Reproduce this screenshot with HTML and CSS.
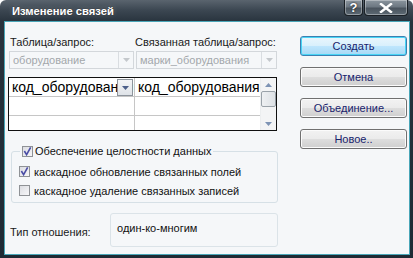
FILE: index.html
```html
<!DOCTYPE html>
<html lang="ru">
<head>
<meta charset="utf-8">
<title>Изменение связей</title>
<link rel="stylesheet" href="styles.css">
</head>
<body>
<div class="window">
  <div class="titlebar">
    <span class="title">Изменение связей</span>
    <div class="caption-btns">
      <span class="cap-btn help">?</span>
      <span class="cap-btn close">
        <svg width="14" height="10" viewBox="0 0 14 10"><path d="M2 1 L12 9 M12 1 L2 9" stroke="#fff" stroke-width="2.4" stroke-linecap="square"/></svg>
      </span>
    </div>
  </div>
  <div class="client">
    <div class="left">
      <div class="labels">
        <span class="lbl lbl1">Таблица/запрос:</span>
        <span class="lbl lbl2">Связанная таблица/запрос:</span>
      </div>
      <div class="combos">
        <div class="combo c1"><span>оборудование</span><span class="cbtn"><svg width="7" height="4" viewBox="0 0 7 4"><path d="M0 0 H7 L3.5 4Z" fill="#c4c8cc"/></svg></span></div>
        <div class="combo c2"><span>марки_оборудования</span><span class="cbtn"><svg width="7" height="4" viewBox="0 0 7 4"><path d="M0 0 H7 L3.5 4Z" fill="#c4c8cc"/></svg></span></div>
      </div>
      <div class="grid">
        <div class="cols">
          <div class="row">
            <div class="cell col1"><span class="ctext">код_оборудования</span><span class="gbtn"><svg width="7" height="4" viewBox="0 0 7 4"><path d="M0 0 H7 L3.5 4Z" fill="#4c5f8a"/></svg></span></div>
            <div class="cell col2"><span class="ctext">код_оборудования</span></div>
          </div>
          <div class="row">
            <div class="cell col1"></div>
            <div class="cell col2"></div>
          </div>
          <div class="row last">
            <div class="cell col1"></div>
            <div class="cell col2"></div>
          </div>
        </div>
        <div class="scroll">
          <svg class="sarrow" width="7" height="4" viewBox="0 0 7 4"><path d="M0 4 H7 L3.5 0Z" fill="#7d93b4"/></svg>
          <div class="thumb"></div>
          <div class="track"></div>
          <svg class="sarrow" width="7" height="4" viewBox="0 0 7 4"><path d="M0 0 H7 L3.5 4Z" fill="#7d93b4"/></svg>
        </div>
      </div>
      <fieldset class="group">
        <legend class="chk chk-first"><span class="box on"><svg width="9" height="9" viewBox="0 0 10 10"><path d="M1.5 4.5 L4 8.5 L8.5 0.5" fill="none" stroke="#4b4ea6" stroke-width="1.8"/></svg></span>Обеспечение целостности данных</legend>
        <div class="chk"><span class="box on"><svg width="9" height="9" viewBox="0 0 10 10"><path d="M1.5 4.5 L4 8.5 L8.5 0.5" fill="none" stroke="#4b4ea6" stroke-width="1.8"/></svg></span>каскадное обновление связанных полей</div>
        <div class="chk"><span class="box"></span>каскадное удаление связанных записей</div>
      </fieldset>
      <div class="type-row">
        <span class="type-lbl">Тип отношения:</span>
        <div class="type-box">один-ко-многим</div>
      </div>
    </div>
    <div class="right">
      <button class="btn default">Создать</button>
      <button class="btn">Отмена</button>
      <button class="btn">Объединение...</button>
      <button class="btn">Новое..</button>
    </div>
  </div>
</div>
</body>
</html>
```

FILE: styles.css
```css
* { box-sizing: border-box; }
html, body { margin: 0; padding: 0; background: #ffffff; }
body { width: 413px; height: 258px; overflow: hidden; font-family: "Liberation Sans", Arial, sans-serif; font-size: 11px; }

.window {
  width: 413px; height: 258px;
  display: flex; flex-direction: column;
  background: linear-gradient(180deg, #5a646e 0px, #3c4752 10px, #28333d 22px, #1e2a34 100%);
  border-radius: 6px 6px 0 0;
  padding: 0 3px 3px 4px;
}

.titlebar {
  height: 21px; flex: none;
  display: flex; align-items: flex-start; justify-content: space-between;
}
.title {
  margin: 3px 0 0 8px;
  color: #ffffff; font-weight: bold; font-size: 11.2px; line-height: 16px;
  text-shadow: 0 0 4px rgba(255,255,255,0.35), 0 0 2px #000;
}
.caption-btns { display: flex; margin-right: 2px; gap: 1px; }
.cap-btn {
  height: 16px;
  display: flex; align-items: center; justify-content: center;
  border: 1px solid #1a2026; border-top: none;
  border-radius: 0 0 4px 4px;
  background: linear-gradient(180deg, #8b959e 0%, #6d7882 45%, #4a545e 55%, #5d6a74 100%);
  box-shadow: inset 0 0 0 1px rgba(255,255,255,0.35);
  color: #fff; font-weight: bold; font-size: 13px;
  text-shadow: 0 0 2px #000;
}
.cap-btn.help { width: 19px; }
.cap-btn.close { width: 44px; }

.client {
  flex: 1;
  display: flex;
  background: #f5f7f9;
  border: 1px solid #49a6b8;
  padding: 13px 0 0 4px;
}

.left { width: 273px; display: flex; flex-direction: column; }
.labels { display: flex; height: 14px; line-height: 14px; color: #1a1a1a; white-space: nowrap; }
.lbl1 { width: 126px; padding-left: 1px; }

.combos { display: flex; gap: 2px; margin-top: 2px; height: 18px; }
.combo {
  display: flex; align-items: center; justify-content: space-between;
  border: 1px solid #d3d7db; background: #f5f7f9;
  color: #a3a7ab; padding-left: 3px; white-space: nowrap; overflow: hidden;
}
.combo.c1 { width: 125px; }
.combo.c2 { width: 141px; }
.cbtn {
  width: 15px; height: 16px; flex: none;
  display: flex; align-items: center; justify-content: center;
  border-left: 1px solid #d9dde1;
}

.grid {
  margin-top: 8px; width: 269px; height: 54px; margin-left: -1px;
  border: 1px solid #101010; background: #ffffff;
  display: flex; overflow: hidden;
}
.cols { flex: 1; display: flex; flex-direction: column; }
.row { display: flex; height: 19px; border-bottom: 1px solid #c6c6c6; flex: none; }
.row.last { border-bottom: none; }
.cell { height: 100%; overflow: hidden; display: flex; align-items: center; position: relative; }
.col1 { width: 126px; border-right: 1px solid #c6c6c6; }
.col2 { flex: 1; }
.ctext { font-size: 14px; color: #000; white-space: nowrap; padding-left: 3px; line-height: 18px; }
.gbtn {
  position: absolute; right: 1px; top: 1px;
  width: 16px; height: 17px;
  display: flex; align-items: center; justify-content: center;
  background: linear-gradient(180deg, #f4f5f7, #dfe3e8);
  border: 1px solid #8d949c;
}
.scroll {
  width: 16px; flex: none;
  display: flex; flex-direction: column; align-items: center;
  background: #f3f4f5; border-left: 1px solid #eceeef;
}
.sarrow { margin: 5px 0 4px; flex: none; }
.thumb {
  width: 15px; height: 16px; flex: none;
  border: 1px solid #9aa2a9; border-radius: 2px;
  background: linear-gradient(90deg, #eef0f2, #dde1e5);
}
.track { flex: 1; }

.group {
  margin: 12px 0 0 2px; padding: 3px 0 2px 7px;
  width: 267px;
  border: 1px solid #d6e0e6; border-radius: 3px;
}
.chk { display: flex; align-items: center; height: 19px; color: #111; white-space: nowrap; }
.chk-first { padding: 0 2px; margin-left: 1px; height: 16px; }
.box {
  width: 11px; height: 11px; flex: none; margin-right: 4px;
  border: 1px solid #8f9296;
  background: linear-gradient(135deg, #dcdde2, #f7f7f9);
  display: flex; align-items: center; justify-content: center;
}
.chk-first .box { margin-right: 2px; }

.type-row { display: flex; align-items: center; margin-top: 10px; }
.type-lbl { width: 101px; padding-left: 1px; margin-top: 3px; color: #1a1a1a; }
.type-box {
  width: 168px; height: 34px;
  border: 1px solid #dbe3e8; border-radius: 3px;
  padding: 8px 0 0 6px; color: #111;
}

.right { display: flex; flex-direction: column; gap: 11px; margin-left: 18px; padding-top: 1px; }
.btn {
  width: 107px; height: 20px; margin: 0; padding: 0;
  font-family: inherit; font-size: 11px; color: #18236c;
  border: 1px solid #707070; border-radius: 3px;
  background: linear-gradient(180deg, #f2f2f2 0%, #ebebeb 48%, #dddddd 52%, #cfcfcf 100%);
  box-shadow: inset 0 0 0 1px #fbfbfb;
}
.btn.default {
  border-color: #3c7fb1;
  box-shadow: inset 0 0 0 1px #48d5f6;
  background: linear-gradient(180deg, #eaf6fd 0%, #d9f0fc 48%, #bee6fd 52%, #a7d9f5 100%);
}
```
